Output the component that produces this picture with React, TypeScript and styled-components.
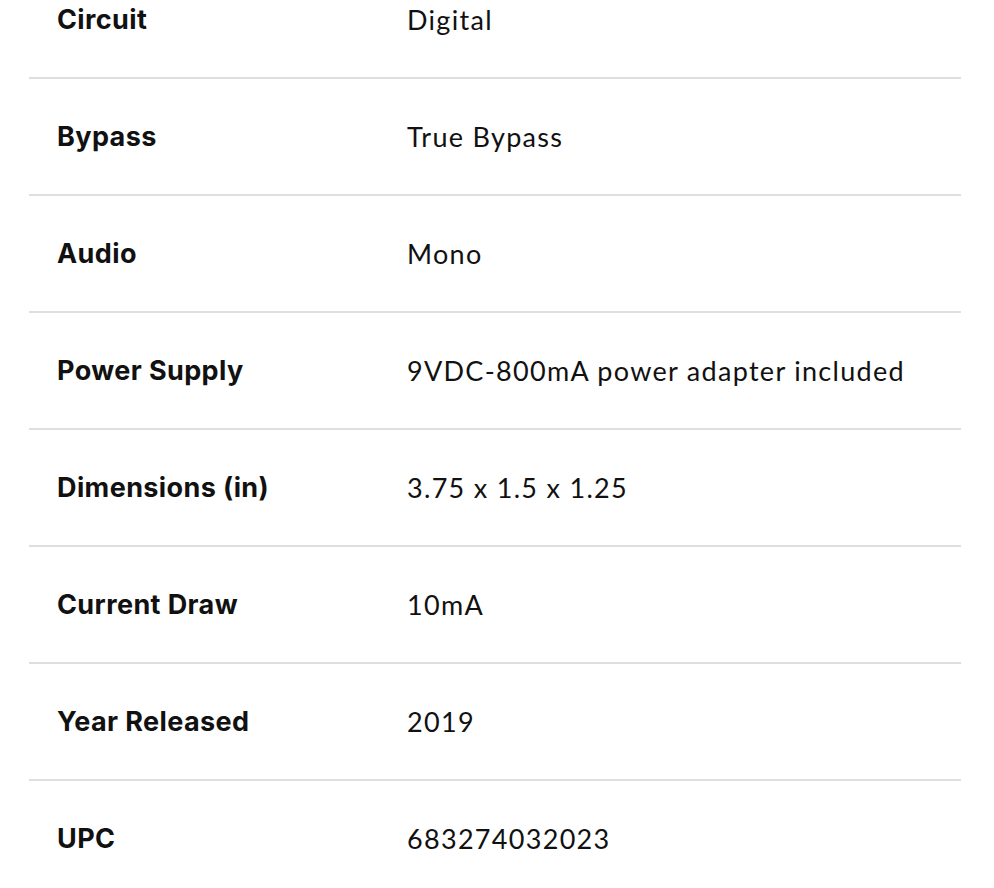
import React from "react";
import styled, { createGlobalStyle } from "styled-components";

const Global = createGlobalStyle`
  html, body { margin: 0; padding: 0; background: #fff; }
  body { overflow: hidden; }
`;

const Table = styled.div`
  margin: -38px 33px 0 29px;
  display: flex;
  flex-direction: column;
`;

const Row = styled.div`
  display: grid;
  grid-template-columns: 350px 1fr;
  align-items: center;
  height: 115px;
  padding-left: 28px;
  border-bottom: 2px solid #dfdfdf;
  &:last-child { border-bottom: none; }
`;

const Label = styled.div`
  font-family: Inter, "Liberation Sans", sans-serif;
  font-weight: 700;
  font-size: 27px;
  letter-spacing: 0.4px;
  color: #111;
`;

const Value = styled.div`
  font-family: Lato, "Noto Sans", sans-serif;
  font-size: 27px;
  color: #111;
  letter-spacing: 1.3px;
`;

const specs: [string, string][] = [
  ["Circuit", "Digital"],
  ["Bypass", "True Bypass"],
  ["Audio", "Mono"],
  ["Power Supply", "9VDC-800mA power adapter included"],
  ["Dimensions (in)", "3.75 x 1.5 x 1.25"],
  ["Current Draw", "10mA"],
  ["Year Released", "2019"],
  ["UPC", "683274032023"],
];

export default function App() {
  return (
    <>
      <Global />
      <Table>
        {specs.map(([k, v]) => (
          <Row key={k}>
            <Label>{k}</Label>
            <Value>{v}</Value>
          </Row>
        ))}
      </Table>
    </>
  );
}
